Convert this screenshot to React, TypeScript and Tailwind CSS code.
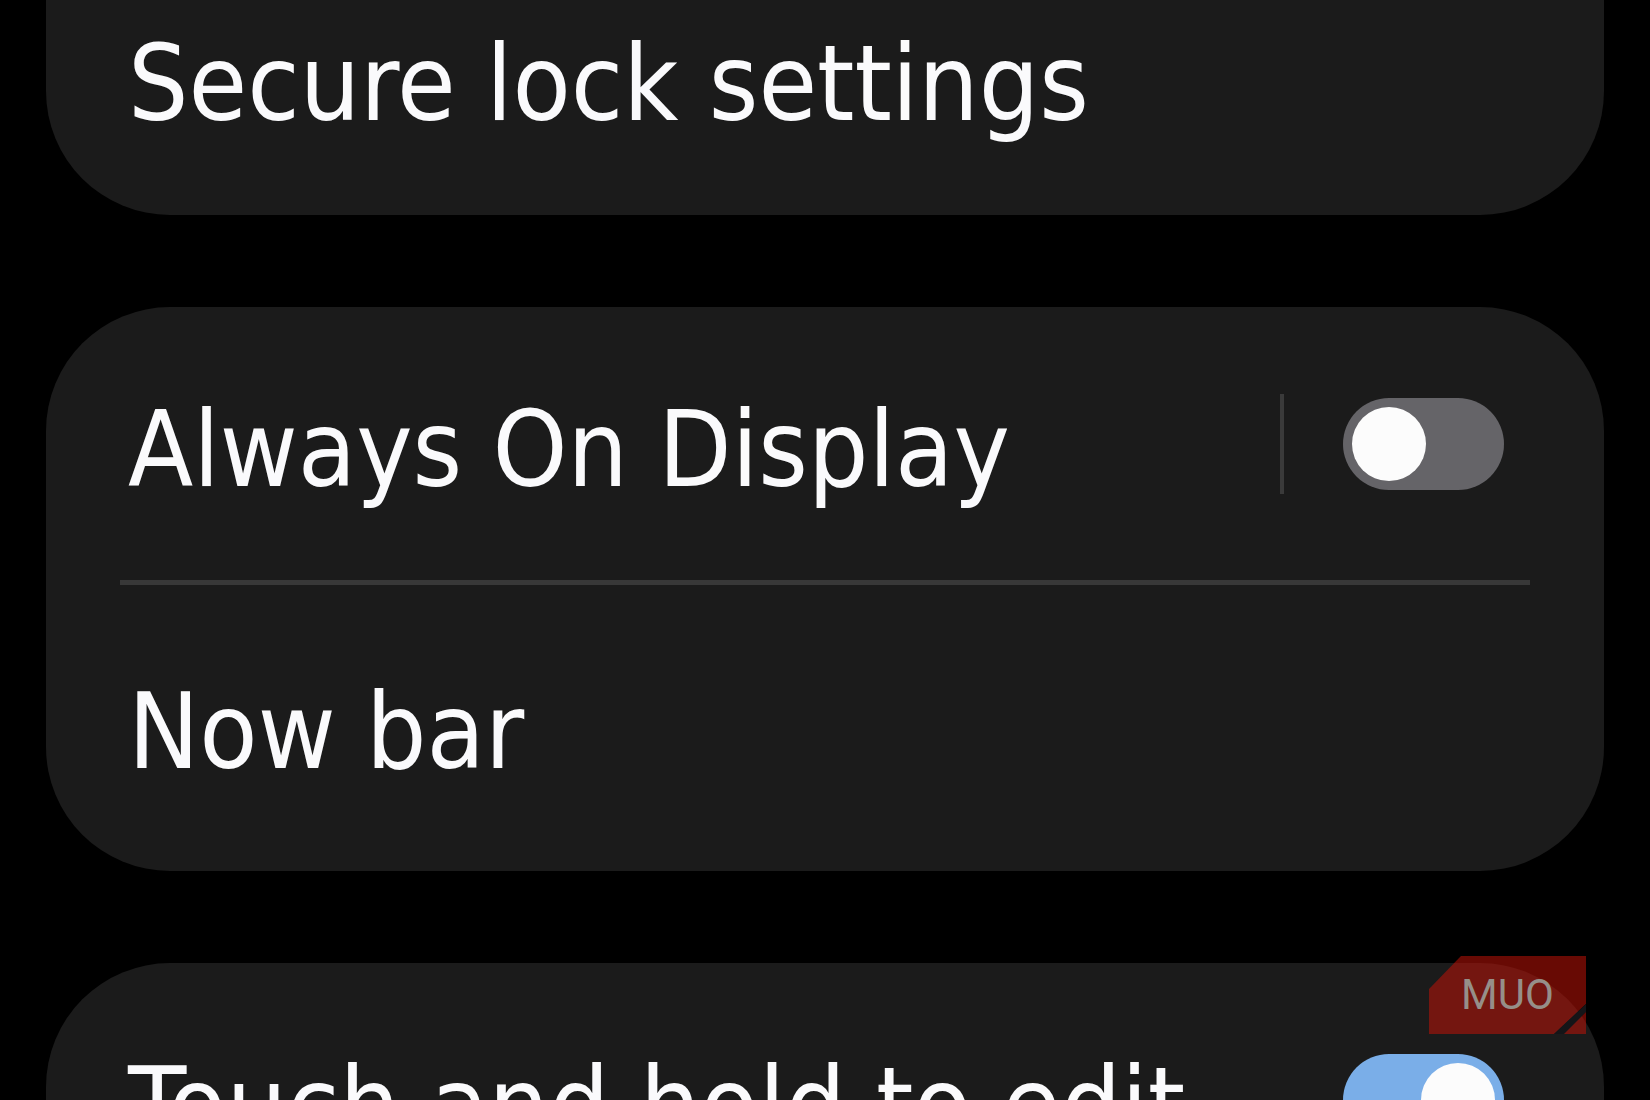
import React, { useState } from 'react';

const Card = ({ children, className = 'rounded-[124px]' }: { children: React.ReactNode; className?: string }) => (
  <section className={`bg-[#1b1b1b] ${className}`}>{children}</section>
);

const Switch = ({
  id,
  checked,
  onChange
}: {
  id: string;
  checked: boolean;
  onChange: (val: boolean) => void;
}) => (
  <input
    id={id}
    type="checkbox"
    role="switch"
    checked={checked}
    onChange={(e) => onChange(e.target.checked)}
    className="flex h-[92px] w-[161px] shrink-0 cursor-pointer appearance-none items-center rounded-full bg-[#656468] px-[9px] before:size-[74px] before:rounded-full before:bg-[#fcfcfc] before:content-[''] checked:justify-end checked:bg-[#7aaee8]"
  />
);

// Watermark in the corner of the screen
const Badge = () => (
  <div className="pointer-events-none absolute right-16 bottom-[66px] flex h-[78px] w-[157px] items-center justify-center">
    <svg viewBox="0 0 157 78" className="absolute inset-0 h-full w-full" aria-hidden="true">
      <path d="M32 0H157V48L125 78H0V33Z" fill="#be1207" fillOpacity="0.55" />
      <path d="M157 48V56L135 78H125Z" fill="#151518" />
      <path d="M157 56V78H135Z" fill="#be1207" fillOpacity="0.55" />
    </svg>
    <span className="relative font-[Roboto,sans-serif] text-[42px] leading-none text-[#968f89]">MUO</span>
  </div>
);

const App: React.FC = () => {
  const [alwaysOn, setAlwaysOn] = useState(false);
  const [touchAndHold, setTouchAndHold] = useState(true);

  return (
    <div className="relative h-screen overflow-hidden bg-black font-['DejaVu_Sans_Condensed','DejaVu_Sans',sans-serif] text-[106px] leading-[108px] text-[#fafafc]">
      <main className="flex flex-col gap-[92px] px-[46px]">
        <Card className="rounded-b-[124px]">
          <button type="button" className="block w-full pt-[30px] pr-[100px] pb-[77px] pl-[82px] text-left">
            Secure lock settings
          </button>
        </Card>

        <Card>
          <div className="flex items-center py-[76px] pr-[100px] pl-[82px]">
            <label htmlFor="always-on" className="flex-1 pt-[13px]">
              Always On Display
            </label>
            <div className="mr-[59px] h-[100px] w-1 bg-[#3a3a3a]" />
            <Switch id="always-on" checked={alwaysOn} onChange={setAlwaysOn} />
          </div>
          <hr className="mx-[74px] border-t-[5px] border-[#383838]" />
          <button type="button" className="block w-full pt-[93px] pr-[100px] pb-[85px] pl-[82px] text-left">
            Now bar
          </button>
        </Card>

        <Card>
          <div className="flex items-center py-[76px] pr-[100px] pl-[82px]">
            <label htmlFor="touch-hold" className="flex-1 pt-[13px]">
              Touch and hold to edit
            </label>
            <Switch id="touch-hold" checked={touchAndHold} onChange={setTouchAndHold} />
          </div>
        </Card>
      </main>

      <Badge />
    </div>
  );
};

export default App;
